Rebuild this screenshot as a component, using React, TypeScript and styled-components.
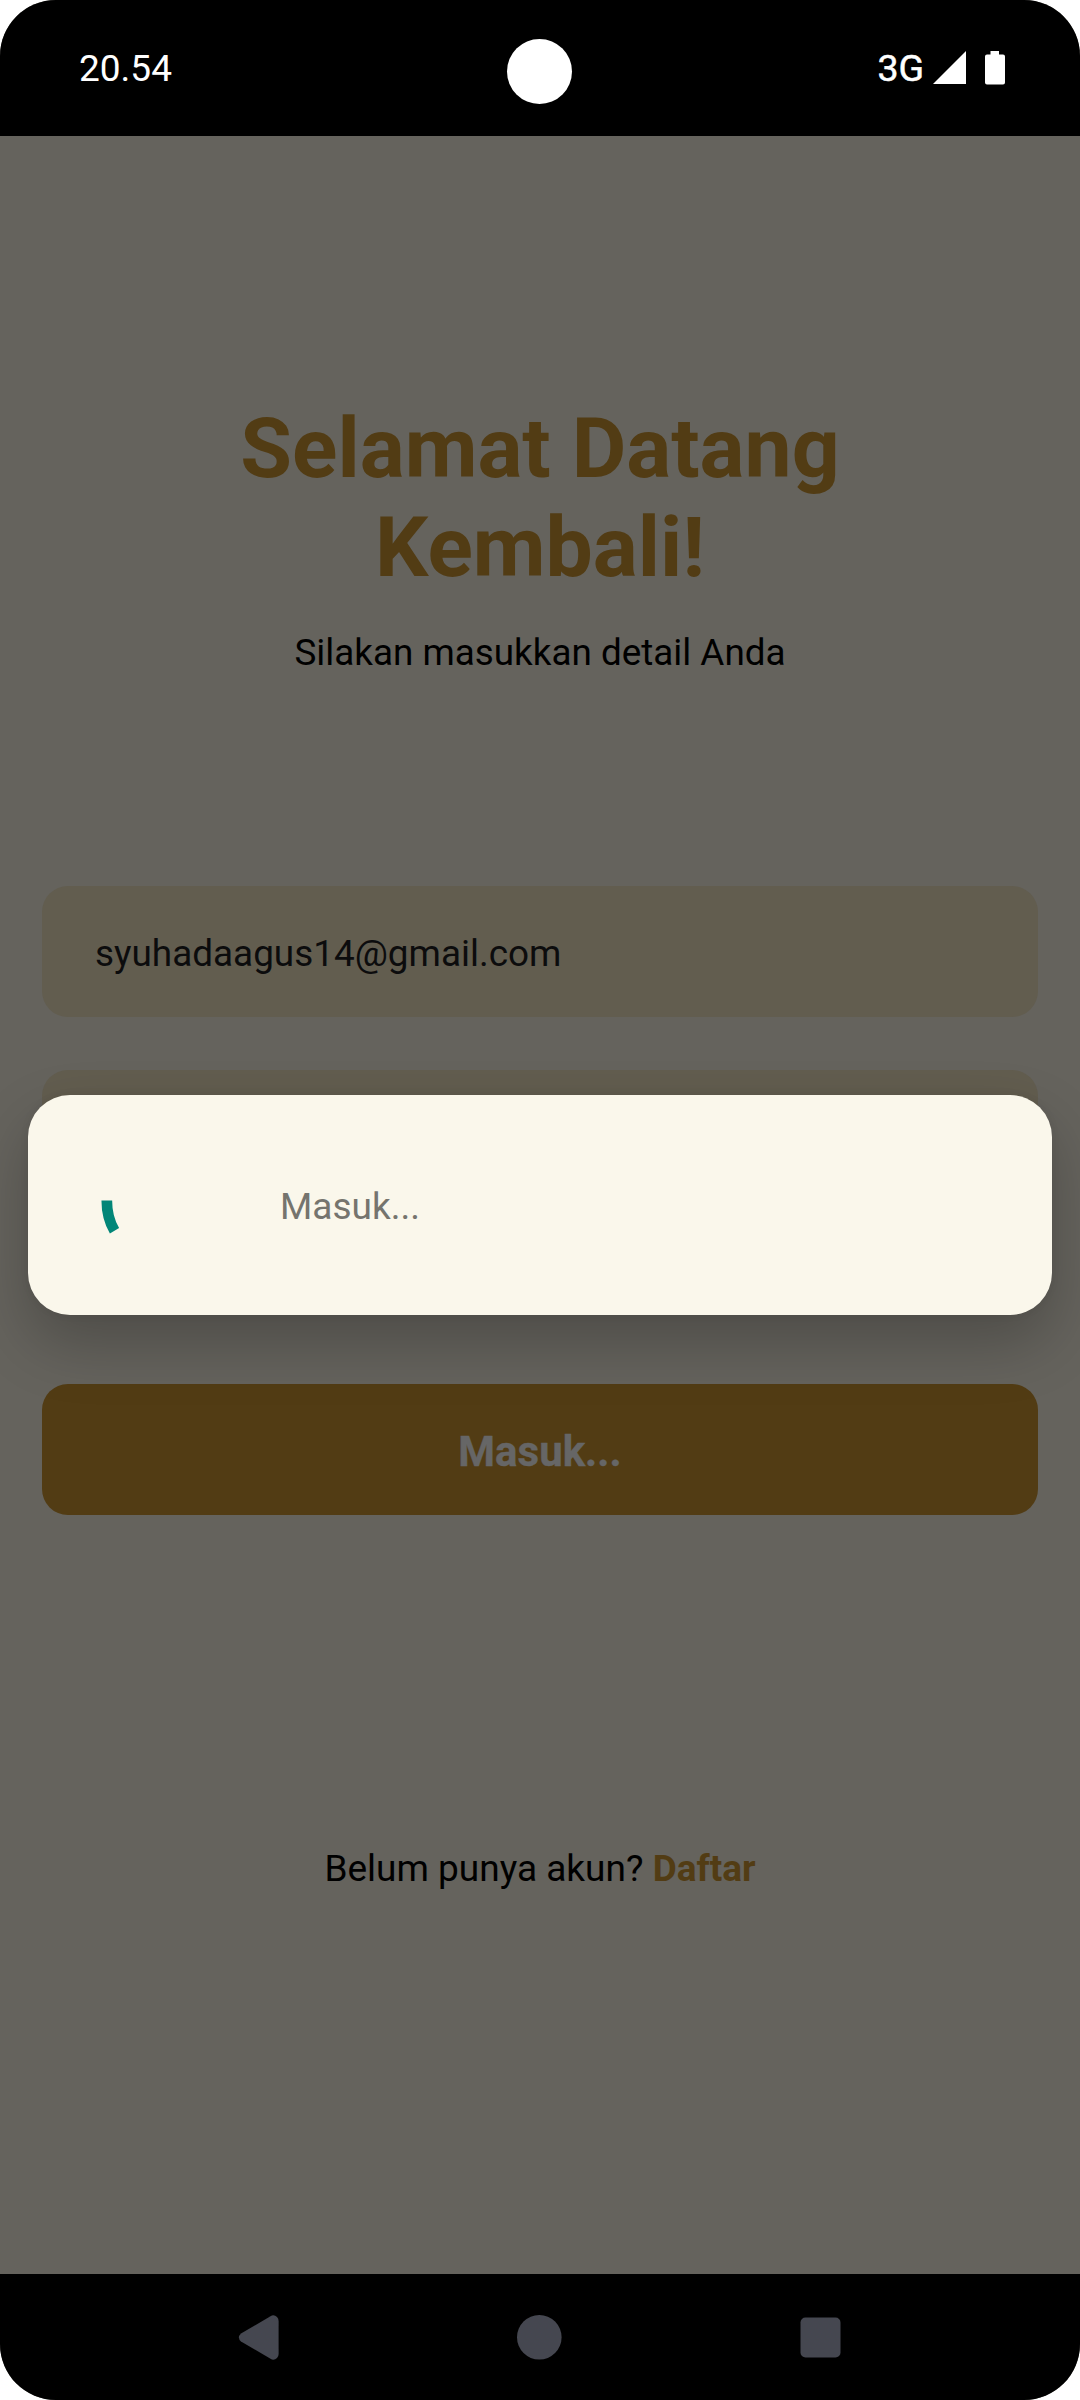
import React from "react";
import styled, { createGlobalStyle } from "styled-components";

const GlobalStyle = createGlobalStyle`
  * { box-sizing: border-box; }
  body { margin: 0; background: #ffffff; }
`;

const Phone = styled.div`
  position: relative;
  display: flex;
  flex-direction: column;
  width: 1080px;
  height: 2400px;
  overflow: hidden;
  border-radius: 56px;
  background: #65635d;
  font-family: Roboto, "Liberation Sans", sans-serif;
  font-size: 37px;
  line-height: 43px;
  color: #000000;
`;

const StatusBar = styled.header`
  display: grid;
  grid-template-columns: 1fr 65px 1fr;
  height: 136px;
  flex: none;
  padding: 39px 75px 0 74px;
  background: #000000;
  color: #ffffff;
`;

const Clock = styled.span`
  padding-top: 8px;
  padding-left: 5px;
`;

const Camera = styled.span`
  width: 65px;
  height: 65px;
  border-radius: 50%;
  background: #ffffff;
`;

const StatusIcons = styled.div`
  display: flex;
  justify-content: flex-end;
  align-items: flex-start;
  padding-top: 12px;
`;

const Network = styled.span`
  margin-top: -4px;
  margin-right: 9px;
  font-size: 37.5px;
  font-weight: 400;
  -webkit-text-stroke: 0.5px #ffffff;
`;

const Signal = styled.svg`
  width: 33px;
  height: 33px;
  margin-right: 19px;
`;

const Battery = styled.svg`
  width: 20px;
  height: 34px;
`;

const Page = styled.main`
  display: flex;
  flex: 1;
  flex-direction: column;
  align-items: stretch;
  padding: 263px 42px 0;
`;

const Title = styled.h1`
  width: 720px;
  margin: 0 auto;
  font-size: 84px;
  line-height: 99px;
  font-weight: 700;
  text-align: center;
  color: #523c14;
`;

const Subtitle = styled.p`
  margin: 34px 0 0;
  font-size: 36.85px;
  text-align: center;
`;

const Form = styled.form`
  display: flex;
  flex-direction: column;
  margin-top: 212px;
`;

const Field = styled.div`
  display: flex;
  align-items: center;
  height: 131px;
  margin-bottom: 53px;
  padding: 4px 53px 0;
  border-radius: 26px;
  background: #625d4f;
  color: #0c0c0d;
  font-size: 36.9px;
`;

const SubmitButton = styled.button`
  height: 131px;
  margin-top: 130px;
  padding: 4px 0 0;
  border: 0;
  border-radius: 26px;
  background: #523c14;
  color: #666666;
  font: 700 42px/49px Roboto, "Liberation Sans", sans-serif;
  -webkit-text-stroke: 0.4px #666666;
`;

const SignUp = styled.p`
  margin: 332px 0 0;
  text-align: center;
`;

const SignUpLink = styled.a`
  font-weight: 700;
  color: #523c14;
`;

const Dialog = styled.div`
  position: absolute;
  top: 1095px;
  left: 28px;
  display: flex;
  align-items: center;
  width: 1024px;
  height: 220px;
  padding-left: 65px;
  border-radius: 42px;
  background: #faf7eb;
  box-shadow: 0 28px 62px rgba(0, 0, 0, 0.23), 0 0 10px rgba(0, 0, 0, 0.06);
`;

const Spinner = styled.svg`
  width: 126px;
  height: 126px;
`;

const DialogText = styled.span`
  margin-left: 61px;
  padding-top: 2px;
  color: #75746e;
`;

const NavBar = styled.nav`
  display: flex;
  flex: none;
  justify-content: space-between;
  height: 126px;
  padding: 41px 239px 0 238px;
  background: #000000;
`;

const NavIcon = styled.svg`
  width: 45px;
  height: 45px;
  fill: #454750;
`;

export default function App() {
  return (
    <Phone>
      <GlobalStyle />
      <StatusBar>
        <Clock>20.54</Clock>
        <Camera />
        <StatusIcons>
          <Network>3G</Network>
          <Signal viewBox="0 0 33 33">
            <path d="M33 0V33H0Z" fill="#fff" />
          </Signal>
          <Battery viewBox="0 0 20 34">
            <path
              d="M5.5 0h8.5v3.5h4q2 0 2 2v26q0 2-2 2h-16q-2 0-2-2v-26q0-2 2-2h3.500z"
              fill="#fff"
            />
          </Battery>
        </StatusIcons>
      </StatusBar>

      <Page>
        <Title>Selamat Datang Kembali!</Title>
        <Subtitle>Silakan masukkan detail Anda</Subtitle>
        <Form>
          <Field>syuhadaagus14@gmail.com</Field>
          <Field />
          <SubmitButton type="button">Masuk...</SubmitButton>
        </Form>
        <SignUp>
          Belum punya akun? <SignUpLink>Daftar</SignUpLink>
        </SignUp>
      </Page>

      <NavBar>
        <NavIcon viewBox="0 0 45 45">
          <path d="M3 18.500L32.500 1.200Q36 -.8 39 2Q40.600 3.500 40.600 6V39Q40.600 41.500 39 43Q36 45.800 32.500 43.800L3 26.500Q-1.200 22.500 3 18.500Z" />
        </NavIcon>
        <NavIcon viewBox="0 0 45 45">
          <circle cx="22.3" cy="22.3" r="22.3" />
        </NavIcon>
        <NavIcon viewBox="0 0 45 45">
          <rect x="4.500" y="2.500" width="40" height="40" rx="5" />
        </NavIcon>
      </NavBar>

      <Dialog>
        <Spinner viewBox="0 0 126 126">
          <path
            d="M13.800 58.500C13.800 70 16 79.500 21.500 88.800"
            fill="none"
            stroke="#028678"
            strokeWidth="10.700"
          />
        </Spinner>
        <DialogText>Masuk...</DialogText>
      </Dialog>
    </Phone>
  );
}
